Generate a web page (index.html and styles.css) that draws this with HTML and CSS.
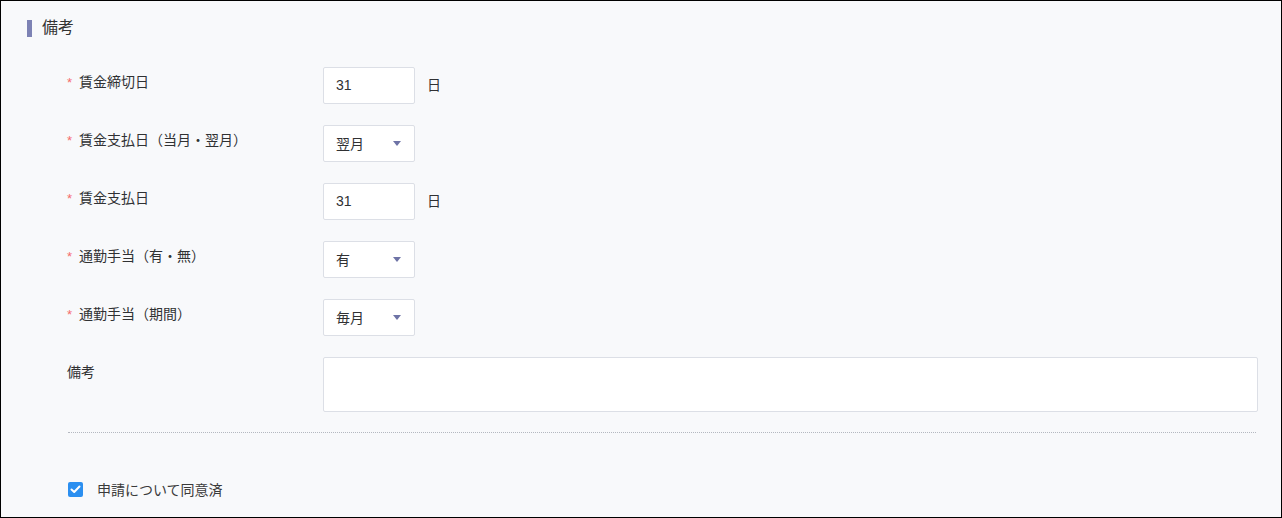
FILE: index.html
```html
<!DOCTYPE html>
<html lang="ja">
<head>
<meta charset="utf-8">
<link rel="stylesheet" href="styles.css">
</head>
<body>
<div class="page">
  <div class="section-title"><span class="bar"></span><span class="title-text">備考</span></div>
  <div class="form">
    <div class="row">
      <div class="label"><span class="req">*</span>賃金締切日</div>
      <div class="control"><div class="input">31</div><span class="unit">日</span></div>
    </div>
    <div class="row">
      <div class="label"><span class="req">*</span>賃金支払日（当月・翌月）</div>
      <div class="control"><div class="input select"><span>翌月</span><span class="arrow"></span></div></div>
    </div>
    <div class="row">
      <div class="label"><span class="req">*</span>賃金支払日</div>
      <div class="control"><div class="input">31</div><span class="unit">日</span></div>
    </div>
    <div class="row">
      <div class="label"><span class="req">*</span>通勤手当（有・無）</div>
      <div class="control"><div class="input select"><span>有</span><span class="arrow"></span></div></div>
    </div>
    <div class="row">
      <div class="label"><span class="req">*</span>通勤手当（期間）</div>
      <div class="control"><div class="input select"><span>毎月</span><span class="arrow"></span></div></div>
    </div>
    <div class="row">
      <div class="label">備考</div>
      <div class="control wide"><div class="textarea"></div></div>
    </div>
  </div>
  <div class="divider"></div>
  <div class="agree">
    <span class="checkbox"><svg width="11" height="9" viewBox="0 0 11 9"><path d="M1.5 4.5 L4.2 7 L9.5 1.5" fill="none" stroke="#fff" stroke-width="2" stroke-linecap="round" stroke-linejoin="round"/></svg></span>
    <span class="agree-text">申請について同意済</span>
  </div>
</div>
</body>
</html>
```
FILE: styles.css
```css
html, body {
  margin: 0;
  padding: 0;
}
body {
  font-family: "Liberation Sans", "Noto Sans CJK JP", sans-serif;
  color: #303133;
  font-size: 14px;
}
.page {
  width: 1282px;
  height: 518px;
  box-sizing: border-box;
  border: 1px solid #000;
  background: #f8f9fb;
  overflow: hidden;
}
.section-title {
  display: flex;
  align-items: center;
  padding: 18px 0 0 26px;
  height: 18px;
}
.bar {
  width: 5px;
  height: 17px;
  background: #7d82b4;
}
.title-text {
  margin-left: 10px;
  font-size: 16px;
  line-height: 18px;
  color: #333;
}
.form {
  padding: 30px 23px 0 66px;
  display: flex;
  flex-direction: column;
  gap: 21px;
}
.row {
  display: flex;
  align-items: flex-start;
}
.label {
  width: 256px;
  flex: none;
  padding-top: 5px;
  line-height: 20px;
  font-size: 14px;
  color: #303133;
}
.req {
  color: #f56c6c;
  margin-right: 7px;
  font-size: 13px;
}
.control {
  display: flex;
  align-items: center;
}
.control.wide {
  flex: 1;
}
.input {
  box-sizing: border-box;
  width: 92px;
  height: 37px;
  background: #fff;
  border: 1px solid #dcdfe6;
  border-radius: 2px;
  padding: 0 12px 1px;
  display: flex;
  align-items: center;
  font-size: 14px;
  color: #303133;
}
.select {
  justify-content: space-between;
  padding-right: 13px;
}
.arrow {
  width: 0;
  height: 0;
  border-left: 4.5px solid transparent;
  border-right: 4.5px solid transparent;
  border-top: 5px solid #6e73a6;
}
.unit {
  margin-left: 12px;
  font-size: 14px;
  line-height: 14px;
  margin-bottom: 2px;
}
.textarea {
  box-sizing: border-box;
  flex: 1;
  height: 55px;
  background: #fff;
  border: 1px solid #dcdfe6;
  border-radius: 2px;
}
.divider {
  margin: 20px 25px 0 67px;
  border-top: 1px dotted #b4b8c0;
}
.agree {
  display: flex;
  align-items: center;
  padding: 46px 0 0 67px;
}
.checkbox {
  width: 15px;
  height: 15px;
  border-radius: 2px;
  background: #2b8ff0;
  display: flex;
  align-items: center;
  justify-content: center;
}
.agree-text {
  margin-left: 14px;
  font-size: 14px;
  color: #3a3a3a;
}
```
